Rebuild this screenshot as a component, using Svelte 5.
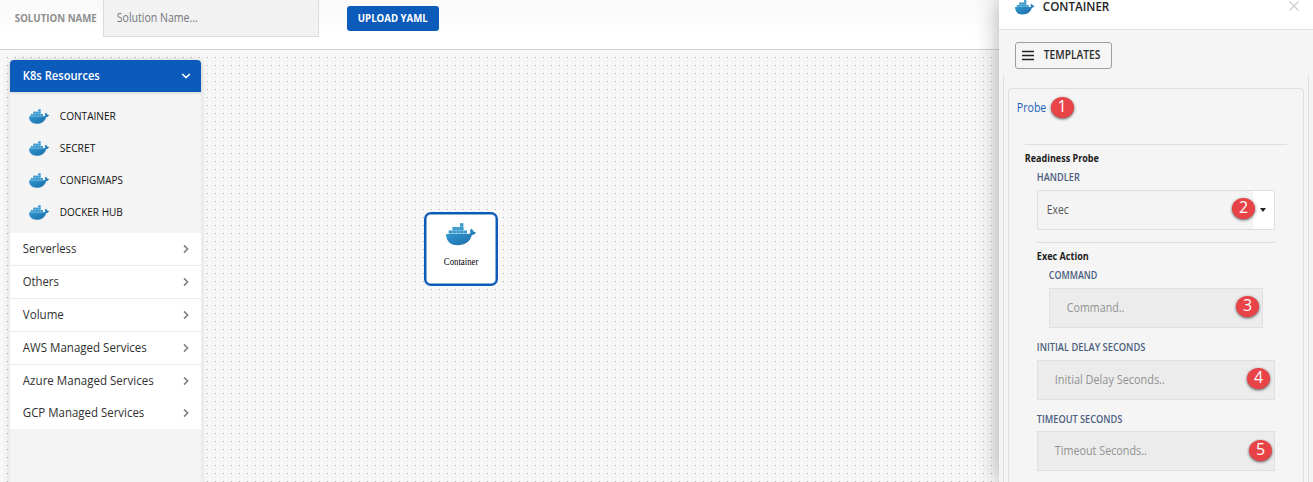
<script>
  const resources = [
    { name: 'CONTAINER', w: 56 },
    { name: 'SECRET', w: 35.5 },
    { name: 'CONFIGMAPS', w: 63 },
    { name: 'DOCKER HUB', w: 63 }
  ];
  const groups = [
    { name: 'Serverless', w: 53.5 },
    { name: 'Others', w: 36 },
    { name: 'Volume', w: 41 },
    { name: 'AWS Managed Services', w: 124 },
    { name: 'Azure Managed Services', w: 131 },
    { name: 'GCP Managed Services', w: 121.5 }
  ];
</script>

{#snippet label(text, w, kind)}
  <svg class="label {kind}" width={w} height="16"><text x="-0.2" y="12" textLength={w} lengthAdjust="spacingAndGlyphs">{text}</text></svg>
{/snippet}

{#snippet whale(w)}
  <svg class="whale" width={w} height={w * 0.75} viewBox="0 0 90 68">
    <defs>
      <linearGradient id="sea" x1="0" y1="0" x2="1" y2="1">
        <stop offset="0" stop-color="#35a0da" />
        <stop offset="1" stop-color="#1a68a4" />
      </linearGradient>
    </defs>
    <g fill="#3d9acc">
      <path fill="#8cc4e3" d="M8 31.5V23H19V12H42V1H52V12H53V23H63V31.5Z" />
      <rect x="42" y="1" width="10" height="9.5" />
      {#each [19.5, 31, 42] as x}<rect {x} y="12" width="10" height="9.5" />{/each}
      {#each [8, 19.5, 31, 42, 53] as x}<rect {x} y="23" width="10" height="8.5" />{/each}
    </g>
    <path fill="url(#sea)" d="M0 33H65C71 33 75 31 73 27C71 23 73 20 76 17C81 20 83 23 83 27C86 26 89 27 90 28C88 33 84 36 78 36C72 56 58 67 34 67C12 67 0 54 0 33Z" />
  </svg>
{/snippet}

{#snippet badge(n)}
  <span class="badge b{n}"><span>{n}</span></span>
{/snippet}

<div class="app">
  <main>
    <header class="topbar">
      {@render label('SOLUTION NAME', 82, 'title')}
      <div class="name-input">{@render label('Solution Name...', 81, 'hint')}</div>
      <div class="upload">{@render label('UPLOAD YAML', 70, 'button')}</div>
    </header>
    <section class="canvas">
      <aside>
        <div class="side-head">
          {@render label('K8s Resources', 77, 'head')}
          <svg width="10" height="6" viewBox="0 0 10 6"><path d="M1.2 1L5 4.6L8.8 1" fill="none" stroke="#fff" stroke-width="1.6" /></svg>
        </div>
        <div class="resources">
          {#each resources as r}
            <div class="resource">{@render whale(20)}{@render label(r.name, r.w, 'item')}</div>
          {/each}
        </div>
        <div class="groups">
          {#each groups as g}
            <div class="group">
              {@render label(g.name, g.w, 'row')}
              <svg width="6" height="10" viewBox="0 0 6 10"><path d="M1 1.4L4.6 5L1 8.6" fill="none" stroke="#808080" stroke-width="1.6" /></svg>
            </div>
          {/each}
        </div>
      </aside>
      <div class="node">
        {@render whale(30)}
        {@render label('Container', 34.5, 'serif')}
      </div>
    </section>
  </main>

  <div class="panel">
    <div class="panel-head">
      {@render whale(19.5)}
      {@render label('CONTAINER', 66.5, 'panel-title')}
      <svg class="close" width="10" height="10" viewBox="0 0 10 10"><path d="M.5 .5L9.5 9.5M9.5 .5L.5 9.5" stroke="#ccc" stroke-width="1.1" /></svg>
    </div>
    <div class="templates">
      <svg width="12" height="9" viewBox="0 0 12 9"><path d="M0 .5H12M0 4.5H12M0 8.5H12" stroke="#222" stroke-width="1.3" /></svg>
      {@render label('TEMPLATES', 56.5, 'tpl')}
    </div>
    <div class="outer">
      <div class="card">
        <div class="probe">{@render label('Probe', 29.5, 'link')}{@render badge(1)}</div>
        <div class="readiness">
          {@render label('Readiness Probe', 74, 'strong')}
          <div class="fields">
            {@render label('HANDLER', 43, 'caption')}
            <div class="select">
              {@render label('Exec', 22, 'value')}
              <div class="arrow"><i></i></div>
              {@render badge(2)}
            </div>
            <div class="exec">
              {@render label('Exec Action', 52, 'strong')}
              <div class="command">
                {@render label('COMMAND', 48.5, 'caption')}
                <div class="input">{@render label('Command..', 57.5, 'placeholder')}{@render badge(3)}</div>
              </div>
            </div>
            {@render label('INITIAL DELAY SECONDS', 108.5, 'caption')}
            <div class="input">{@render label('Initial Delay Seconds..', 110, 'placeholder')}{@render badge(4)}</div>
            <div class="timeout">
              {@render label('TIMEOUT SECONDS', 85.5, 'caption')}
              <div class="input">{@render label('Timeout Seconds..', 92, 'placeholder')}{@render badge(5)}</div>
            </div>
          </div>
        </div>
      </div>
    </div>
  </div>
</div>

<style>
  :global(body) { overflow: hidden; }
  .app, .app * { box-sizing: border-box; }
  .app { display: flex; width: 1313px; height: 482px; overflow: hidden; font-family: 'Open Sans', 'Noto Sans', sans-serif; }
  svg { display: block; flex: none; overflow: visible; }
  main { flex: none; width: 999px; display: flex; flex-direction: column; }

  .label { fill: #222; font-size: 11px; }
  .title { fill: #8e8e8e; font-weight: 700; font-size: 11px; }
  .hint { fill: #72787f; font-size: 12px; }
  .button { fill: #fff; font-weight: 700; font-size: 11.3px; }
  .head { fill: #fff; font-weight: 600; font-size: 12.5px; }
  .item { fill: #111; font-size: 11.3px; }
  .row { fill: #303030; font-size: 12.8px; }
  .serif { fill: #000; font-family: 'Liberation Serif', serif; font-size: 9.5px; }
  .panel-title { fill: #222; font-weight: 600; font-size: 12.5px; }
  .tpl { fill: #2a2a2a; font-weight: 600; font-size: 11.8px; }
  .link { fill: #1a5fbd; font-size: 11.8px; }
  .strong { fill: #1c1c1c; font-weight: 700; font-size: 10.3px; }
  .caption { fill: #4b5e80; font-weight: 600; font-size: 10.3px; }
  .value { fill: #555; font-size: 11.8px; }
  .placeholder { fill: #929292; font-size: 11.8px; }

  .topbar { height: 50px; flex: none; display: flex; align-items: flex-start; border-bottom: 1px solid #d2d2d2; background: linear-gradient(#f9f9f9, #fff 35px); padding-left: 15px; }
  .title { margin-top: 10px; }
  .name-input { margin-left: 6px; width: 216px; height: 37px; background: #f2f2f2; border: 1px solid #dcdcdc; border-top: 0; padding: 10px 0 0 13px; }
  .upload { margin: 6px 0 0 28px; width: 92px; height: 25px; border-radius: 3px; background: #0c5aba; padding: 4px 0 0 11px; }

  .canvas {
    position: relative; flex: 1; padding: 10px 0 0 10px;
    background-color: #f8f8f8;
    background-size: 8px 8px;
    background-image:
      radial-gradient(circle at 7.5px 7.5px, #b4b4b4 0, #b4b4b4 .6px, transparent .75px),
      radial-gradient(circle at 6.5px 7.5px, #e2e2e2 0, #e2e2e2 .6px, transparent .75px),
      radial-gradient(circle at 3.5px 7.5px, #ececec 0, #ececec .6px, transparent .75px),
      radial-gradient(circle at 3.5px 3.5px, #e4e4e4 0, #e4e4e4 .6px, transparent .75px),
      radial-gradient(circle at 7.5px 3.5px, #ececec 0, #ececec .6px, transparent .75px);
  }

  aside { width: 191px; height: 430px; background: #f4f4f4; border-radius: 4px 4px 0 0; box-shadow: 0 0 7px rgba(0, 0, 0, .13); }
  .side-head { height: 32px; background: #0c5aba; border-radius: 4px 4px 0 0; display: flex; align-items: center; justify-content: space-between; padding: 0 10.5px 0 12.5px; box-shadow: 0 1px 3px rgba(0, 0, 0, .15); }
  .resources { height: 141px; padding-top: 8px; }
  .resource { height: 32px; display: flex; align-items: center; gap: 10.5px; padding-left: 19px; }
  .groups { background: #fff; }
  .group { height: 33px; border-bottom: 1px solid #ececec; display: flex; align-items: center; justify-content: space-between; padding: 0 12.5px; }
  .group:nth-child(5) { border-bottom: 0; height: 32px; }
  .group:last-child { border-bottom: 0; height: 32px; }

  .node { position: absolute; left: 424px; top: 162px; width: 74px; height: 74px; border: 2px solid #0c5aba; border-radius: 7px; background: #fff; display: flex; flex-direction: column; align-items: center; padding-top: 9px; gap: 7.5px; box-shadow: inset 0 0 0 .5px #0c5aba; }

  .panel { position: relative; flex: none; width: 314px; background: #f5f5f5; box-shadow: 0 0 22px rgba(0, 0, 0, .32); display: flex; flex-direction: column; }
  .panel-head { flex: none; height: 30px; background: #fff; border-bottom: 1px solid #e1e1e1; display: flex; align-items: flex-start; padding: 0 14px 0 16px; }
  .panel-head .panel-title { margin: -1px 0 0 8px; }
  .close { margin: 1px 0 0 auto; }
  .templates { flex: none; width: 97px; height: 27px; margin: 12px 0 0 16px; border: 1px solid #9e9e9e; border-radius: 3px; display: flex; align-items: center; padding-left: 6px; gap: 10px; }
  .templates .label { margin-top: -1px; }
  .outer { flex: 1; width: 306px; margin: 6px 0 0 4px; padding: 13px 4px 0; border: solid #dedfe1; border-width: 0 1px; }
  .card { height: 420px; border: 1px solid #dedfe3; border-radius: 4px; padding: 11px 16px 0 16px; }
  .probe { position: relative; height: 44px; margin-left: -8px; }
  .readiness { position: relative; border-top: 1px solid #dedede; padding-top: 5px; }
  .fields { padding: 3px 12px 0; }
  .select { position: relative; height: 40px; margin-top: 5px; border: 1px solid #dedede; border-radius: 2px; display: flex; align-items: center; padding-left: 8.5px; background: #f4f4f4; }
  .arrow { margin-left: auto; width: 21px; height: 38px; background: #fff; display: flex; align-items: center; justify-content: center; }
  .arrow i { margin-right: 1px; border: 3.5px solid transparent; border-top: 4px solid #222; border-bottom: 0; }
  .exec { margin-top: 12px; border-top: 1px solid #dedede; padding-top: 5px; }
  .command { padding: 3px 12px 11px; }
  .input { position: relative; height: 40px; margin-top: 5px; background: #ececec; border: 1px solid #dfdfdf; display: flex; align-items: center; padding-left: 17px; }
  .timeout { margin-top: 11px; }
  .timeout .input { margin-top: 4px; }

  .badge { position: absolute; width: 23px; height: 21px; border-radius: 50%; background: #e84347; box-shadow: 0 1px 3px rgba(0, 0, 0, .65); color: #fff; font-size: 16px; line-height: 19px; text-align: center; }
  .b1 { left: 33.5px; top: -3px; }
  .b2 { right: 19px; top: 7px; }
  .b3 { right: 3px; top: 7px; }
  .b4 { right: 4px; top: 7px; }
  .b5 { right: 2px; top: 7.5px; }
</style>
